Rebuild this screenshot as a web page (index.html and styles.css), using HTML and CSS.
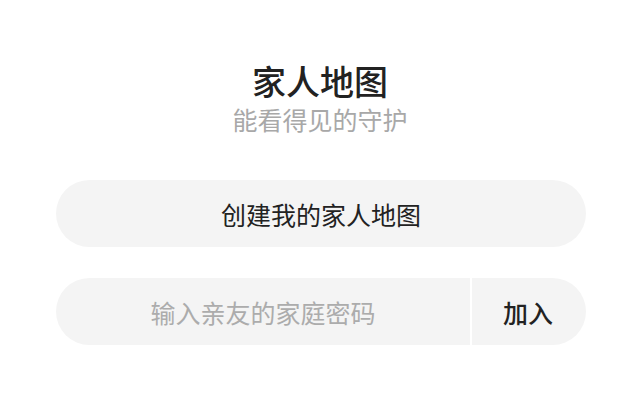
FILE: index.html
```html
<html>

<head>
    <link rel="stylesheet" href="styles.css">
</head>

<body>
    <div id="page">
        <div class="title">家人地图</div>
        <div class="subtitle">能看得见的守护</div>

        <div class="btn create">创建我的家人地图</div>

        <div class="join">
            <input class="code" placeholder="输入亲友的家庭密码">
            <div class="divider"></div>
            <div class="joinBtn">加入</div>
        </div>
    </div>
</body>

</html>
```

FILE: styles.css
```css
* {
    margin: 0;
    padding: 0;
    box-sizing: border-box;
    font-family: "Noto Sans CJK SC", "Noto Sans", sans-serif;
}

body {
    background-color: #ffffff;
    width: 640px;
    height: 397px;
    overflow: hidden;
}

#page {
    display: flex;
    flex-direction: column;
    align-items: center;
    padding-top: 60px;
}

.title {
    font-size: 34px;
    font-weight: 500;
    color: #222222;
    line-height: 42px;
}

.subtitle {
    font-size: 25px;
    color: #a8a8a8;
    line-height: 34px;
}

.btn,
.join {
    width: 530px;
    height: 67px;
    border-radius: 34px;
    background-color: #f4f4f4;
    margin-left: 2px;
}

.create {
    margin-top: 44px;
    display: flex;
    align-items: center;
    justify-content: center;
    font-size: 25px;
    color: #222222;
}

.join {
    margin-top: 31px;
    display: flex;
    overflow: hidden;
}

.code {
    flex: 1;
    border: none;
    outline: none;
    background-color: transparent;
    text-align: center;
    font-size: 25px;
    color: #222222;
}

::placeholder {
    color: #acacac;
}

.divider {
    width: 2px;
    background-color: #ffffff;
}

.joinBtn {
    width: 114px;
    display: flex;
    align-items: center;
    justify-content: center;
    font-size: 25px;
    font-weight: 500;
    color: #222222;
    padding-right: 2px;
}
```
